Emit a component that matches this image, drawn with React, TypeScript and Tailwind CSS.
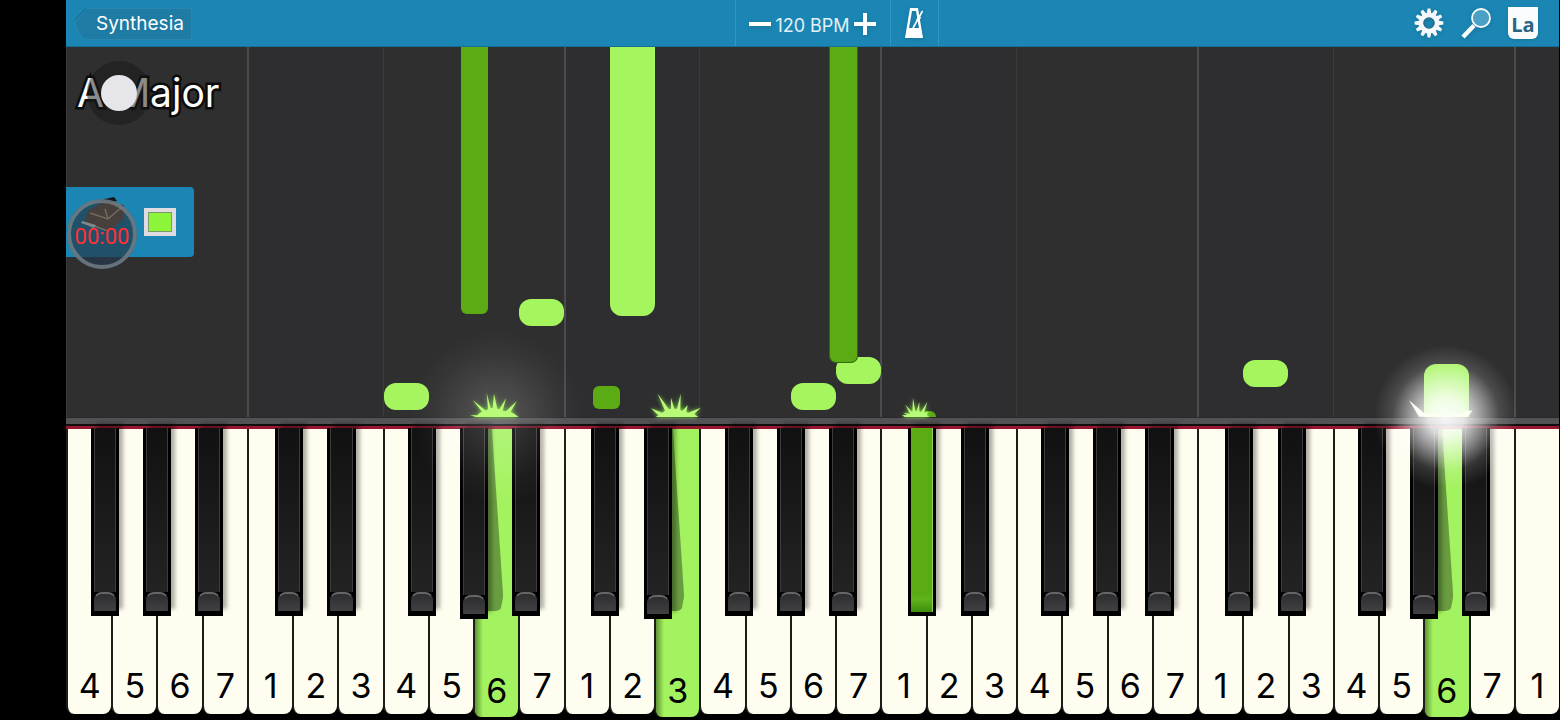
import clsx from "clsx";

type Note = { at: number; bottom: number; height: number; dark?: boolean };

const WHITE_KEYS = 33;
const FIRST_DEGREE = 4;
const PRESSED = [9, 13, 30];
const PRESSED_SHARPS = [18];

// Where the black key starts inside its white key, by scale degree
const SHARP_OFFSET: Record<number, string> = {
  1: "left-[61%]",
  2: "left-[78%]",
  4: "left-[56%]",
  5: "left-[71%]",
  6: "left-[86%]",
};

// One lane per group of keys: C to E, then F to B
const LANES = [
  { at: 0, keys: 4, upper: true },
  { at: 4, keys: 3, upper: false },
  { at: 7, keys: 4, upper: true },
  { at: 11, keys: 3, upper: false },
  { at: 14, keys: 4, upper: true },
  { at: 18, keys: 3, upper: false },
  { at: 21, keys: 4, upper: true },
  { at: 25, keys: 3, upper: false },
  { at: 28, keys: 4, upper: true },
  { at: 32, keys: 1, upper: false },
];

// Horizontal unit is one white key, vertical distance is from the hit line
const NOTES: Note[] = [
  { at: 8.73, bottom: 103, height: 900, dark: true },
  { at: 12.02, bottom: 101, height: 900 },
  { at: 10.02, bottom: 91, height: 27 },
  { at: 7.02, bottom: 7, height: 27 },
  { at: 11.65, bottom: 8, height: 23, dark: true },
  { at: 16.02, bottom: 7, height: 27 },
  { at: 17.02, bottom: 33, height: 27 },
  { at: 16.89, bottom: 55, height: 900, dark: true },
  { at: 26.01, bottom: 30, height: 27 },
  { at: 18.63, bottom: -20, height: 26, dark: true },
  { at: 30.01, bottom: -20, height: 73 },
];

const percent = (keys: number) => `${(keys / WHITE_KEYS) * 100}%`;

const degreeOf = (index: number) => ((index + FIRST_DEGREE - 1) % 7) + 1;

function GearIcon() {
  const teeth = Array.from({ length: 12 }, (_, i) => i * 30);
  return (
    <svg viewBox="0 0 30 30" className="size-[30px] drop-shadow-sm">
      {teeth.map((angle) => (
        <path key={angle} d="M12.600 6 L13.600 .6 H16.400 L17.400 6 Z" fill="#f4f8fa" transform={`rotate(${angle} 15 15)`} />
      ))}
      <circle cx="15" cy="15" r="7.800" fill="none" stroke="#f4f8fa" strokeWidth="5" />
      <circle cx="15" cy="15" r="5.200" fill="none" stroke="#2a6c8c" strokeWidth="1.200" />
    </svg>
  );
}

function MagnifierIcon() {
  return (
    <svg viewBox="0 0 32 32" className="size-8 drop-shadow-sm">
      <path d="M3 30 L14 18.500" stroke="#f8fafb" strokeWidth="4.500" />
      <circle cx="21" cy="11" r="9" fill="#4ba0c5" stroke="#f8fafb" strokeWidth="1.800" />
    </svg>
  );
}

function MetronomeIcon() {
  return (
    <svg viewBox="0 0 20 32" className="h-8 w-5 drop-shadow-sm">
      <path fillRule="evenodd" d="M6 1 H14 L19 31 H1 Z M8 4 L5 21 H15 L12 4 Z" fill="#fff" />
      <path d="M9 21 L18.500 4" stroke="#fff" strokeWidth="1.600" />
      <path d="M12 13 L15.500 8 L17 11 L14 15 Z" fill="#fff" />
    </svg>
  );
}

function Header() {
  return (
    <header className="grid h-[47px] shrink-0 grid-cols-[1fr_156px_1fr] border-b border-[#176f98] bg-[#1b86b3] text-white">
      <div className="flex items-center pt-0.5 pl-2">
        <button className="relative flex h-8 items-center pr-2 pl-[22px] text-[19px]">
          <svg viewBox="0 0 120 32" preserveAspectRatio="none" className="absolute inset-0 size-full">
            <path d="M13 .5 H119.500 V31.500 H13 Q8 31 5 24 L1 15 Z" fill="#1e7ba3" stroke="#2a86ae" />
            <path d="M1 12 L12 .5" stroke="#176488" />
          </svg>
          <span className="relative">Synthesia</span>
        </button>
      </div>

      <div className="flex items-center justify-center border-x border-[#2f96c0] pt-0.5">
        <button aria-label="Slower">
          <svg viewBox="0 0 22 22" className="size-[22px] drop-shadow-sm">
            <path d="M0 11 H22" stroke="#fff" strokeWidth="4" />
          </svg>
        </button>
        <span className="px-1 pt-0.5 text-[18px] whitespace-nowrap text-[#e3f1f8]">120 BPM</span>
        <button aria-label="Faster">
          <svg viewBox="0 0 22 22" className="size-[22px] drop-shadow-sm">
            <path d="M0 11 H22 M11 0 V22" stroke="#fff" strokeWidth="4" />
          </svg>
        </button>
      </div>

      <div className="flex justify-between">
        <button aria-label="Metronome" className="flex w-12 items-center justify-center border-r border-[#2f96c0]">
          <MetronomeIcon />
        </button>
        <div className="flex items-center gap-4 pr-[21px]">
          <button aria-label="Settings">
            <GearIcon />
          </button>
          <button aria-label="Zoom">
            <MagnifierIcon />
          </button>
          <button className="flex h-8 w-[30px] items-end justify-center rounded-b-md bg-[#fafcfd] font-['Open_Sans'] text-xl leading-7 font-bold text-[#2a6483] shadow-sm">
            La
          </button>
        </div>
      </div>
    </header>
  );
}

function SongTitle() {
  return (
    <div className="absolute top-4 left-[11px]">
      <h1 className="text-[39px] leading-[60px] text-white [paint-order:stroke] [-webkit-text-stroke:5px_#0c0c0d]">
        A Major
      </h1>
      {/* Screen recorder dot */}
      <div className="absolute -top-0.5 left-[10px] flex size-16 items-center justify-center rounded-full bg-[#17171a]/50">
        <div className="size-9 rounded-full bg-[#e6e5ea]" />
      </div>
    </div>
  );
}

function InstrumentPanel() {
  return (
    <div className="absolute top-[140px] left-0 h-[70px] w-32 rounded-r bg-[#1b86b3]">
      <div className="absolute top-3 left-px size-[70px] rounded-full bg-[#23394a]/70" />
      <svg viewBox="0 0 60 50" className="absolute top-2 left-2 h-[50px] w-[60px]">
        <path d="M26 5 L40 2 L43 6 L32 10 Z" fill="#17191c" />
        <path d="M14 16 L30 6 L50 10 L49 24 L36 36 L10 30 Z" fill="#463f3c" />
        <path d="M16 18 L34 24 L48 12 M34 24 L31 14 M12 28 L34 36" stroke="#75695f" strokeWidth="1.500" fill="none" />
        <path d="M8 26 L22 30 L20 33 L7 28 Z" fill="#7d878c" />
      </svg>
      <button
        aria-label="Track color"
        className="absolute top-[21px] right-[18px] h-7 w-8 border-4 border-[#dedce2] bg-[#8cf53a] shadow-[inset_0_0_0_1px_#7a9a68]"
      />
      <div className="absolute top-3 left-px flex size-[70px] items-center justify-center rounded-full border-4 border-[#76828a]/80 pt-1">
        <time className="font-['Roboto'] text-[22px] text-[#ff3038]">00:00</time>
      </div>
    </div>
  );
}

function NoteRoll() {
  return (
    <section className="relative min-h-80 flex-1 overflow-hidden bg-[#2f2f31]">
      {LANES.map((lane) => (
        <div
          key={lane.at}
          className={clsx(
            "absolute inset-y-0",
            lane.upper ? "border-l border-[#3b3b3d] bg-[#2f2f2f]" : "border-l-2 border-[#4b4b4e] bg-[#2e2e30]",
          )}
          style={{ left: percent(lane.at), width: percent(lane.keys) }}
        />
      ))}
      {NOTES.map((note) => (
        <div
          key={`${note.at}-${note.bottom}`}
          className={clsx(
            "absolute",
            note.dark ? "w-[27px] rounded-md bg-[#5aab14]" : "w-[45px] rounded-xl bg-[#a5f55f]",
            note.at === 16.89 && "shadow-[0_0_0_1px_#2f6a10]",
          )}
          style={{ left: percent(note.at), bottom: note.bottom, height: note.height }}
        />
      ))}
      <SongTitle />
      <InstrumentPanel />
    </section>
  );
}

// Sparks and glow drawn where sounding notes meet the keys
function HitEffects() {
  return (
    <div className="pointer-events-none relative z-20 h-0">
      <div
        className="absolute top-0 size-44 -translate-1/2 rounded-full bg-[radial-gradient(circle,#ffffff30_0%,#ffffff1c_28%,#ffffff0a_50%,transparent_70%)]"
        style={{ left: percent(9.5) }}
      />
      <div
        className="absolute top-0 size-36 -translate-1/2 rounded-full bg-[radial-gradient(closest-side,#fffffff2_0%,#ffffffd9_25%,#ffffff80_50%,#ffffff24_74%,transparent_100%)]"
        style={{ left: percent(30.5) }}
      />
      <svg viewBox="0 0 150 75" className="absolute bottom-0 h-[25px] w-[50px] -translate-x-1/2 drop-shadow-[0_0_2px_#8be04a]" style={{ left: percent(9.48) }}>
        <path
          d="M0 70 L22 70 L30 62 L36 59 L8 24 L48 56 L54 50 L50 3 L62 48 L68 48 L72 5 L82 50 L88 52 L108 19 L98 56 L108 58 L140 28 L122 60 L130 64 L146 75 H18 Z"
          fill="#b8fb78"
        />
      </svg>
      <svg viewBox="0 0 150 75" className="absolute bottom-0 h-[25px] w-[50px] -translate-x-1/2 drop-shadow-[0_0_2px_#8be04a]" style={{ left: percent(13.48) }}>
        <path
          d="M14 75 L22 70 L0 49 L34 62 L42 56 L20 5 L54 52 L60 50 L60 17 L70 50 L78 50 L89 5 L88 54 L94 56 L110 40 L106 60 L112 62 L149 47 L130 66 L142 75 Z"
          fill="#b8fb78"
        />
      </svg>
      <svg viewBox="0 0 90 57" className="absolute bottom-0 h-[19px] w-[30px] -translate-x-1/2 drop-shadow-[0_0_2px_#8be04a]" style={{ left: percent(18.8) }}>
        <path
          d="M0 52 L16 51 L4 44 L24 47 L10 20 L31 43 L33 0 L40 40 L44 39 L52 12 L52 41 L57 42 L76 12 L66 44 L80 42 L74 50 L82 57 H8 Z"
          fill="#b8fb78"
        />
      </svg>
      <svg viewBox="0 0 192 50" className="absolute bottom-0 h-[17px] w-16 -translate-x-1/2" style={{ left: percent(30.4) }}>
        <path d="M0 0 L36 30 L46 40 H158 L166 34 L191 30 L176 50 H30 Z" fill="#fbfff4" />
      </svg>
    </div>
  );
}

function BlackKey({ degree, pressed, low }: { degree: number; pressed: boolean; low: boolean }) {
  return (
    <button
      aria-label={`Sharp ${degree}`}
      className={clsx(
        "absolute -top-px z-10 flex w-[62%] flex-col bg-black px-[3px]",
        "shadow-[5px_-6px_4px_-1px_#00000050]",
        low ? "h-[191px]" : "h-[188px]",
        SHARP_OFFSET[degree],
      )}
    >
      {pressed ? (
        <span className="mb-1 w-full flex-1 border-r border-[#91d45c] bg-linear-to-b from-[#5aab14] from-90% via-[#5fb31c] via-93% to-[#3f8d0d]" />
      ) : (
        <>
          <span className="w-full flex-1 border-x border-[#3f3b3d] bg-linear-to-b from-[#111112] to-[#232324]" />
          <span className="mb-[5px] h-[19px] w-full rounded-t-lg border-x border-t-2 border-x-[#39393b] border-t-[#666668] bg-linear-to-b from-[#2d2d2f] to-[#414143]" />
        </>
      )}
    </button>
  );
}

function PianoKey({ index }: { index: number }) {
  const degree = degreeOf(index);
  const pressed = PRESSED.includes(index);
  const hasSharp = SHARP_OFFSET[degree] && index < WHITE_KEYS - 1;
  return (
    <div className="relative">
      <button
        className={clsx(
          "relative flex w-full items-end justify-center overflow-hidden rounded-b-lg border-l-2 border-[#1d1d18] text-[34px] leading-10 text-black",
          pressed ? "h-[288px] bg-[#a3f25f] pb-1.5" : "h-[285px] bg-[#fffcf0] pb-2",
        )}
      >
        {pressed && (
          <>
            <span className="absolute top-0 left-0 h-[182px] w-[28px] rounded-br-lg bg-[#699d40] [clip-path:polygon(0_0,60%_0,100%_92%,90%_100%,0_100%)]" />
            <span className="absolute top-[182px] bottom-0 left-0 w-2 bg-linear-to-r from-[#5f9433] to-transparent" />
          </>
        )}
        <span className="relative">{degree}</span>
      </button>
      {hasSharp && (
        <BlackKey
          degree={degree}
          pressed={PRESSED_SHARPS.includes(index)}
          low={PRESSED.includes(index + 1)}
        />
      )}
    </div>
  );
}

function Keyboard() {
  return (
    <section className="shrink-0 bg-black">
      {/* Rail and felt strip */}
      <div className="h-[7px] border-t border-[#29292a] bg-[#525254]" />
      <div className="h-0.5 bg-[#120d0f]" />
      <div className="h-[3px] bg-[#981730]" />
      <div className="grid h-[291px] grid-cols-[repeat(33,minmax(0,1fr))]">
        {Array.from({ length: WHITE_KEYS }, (_, index) => (
          <PianoKey key={index} index={index} />
        ))}
      </div>
    </section>
  );
}

export default function App() {
  return (
    <div className="min-h-screen bg-black pr-px pl-[66px] font-['Inter',sans-serif]">
      <main className="flex min-h-screen flex-col overflow-hidden">
        <Header />
        <NoteRoll />
        <HitEffects />
        <Keyboard />
      </main>
    </div>
  );
}
